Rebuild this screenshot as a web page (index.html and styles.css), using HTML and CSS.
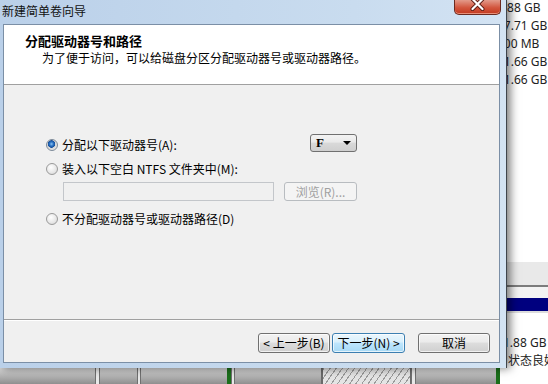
FILE: index.html
```html
<!DOCTYPE html>
<html lang="zh-CN">
<head>
    <meta charset="UTF-8">
    <title>新建简单卷向导</title>
    <link rel="stylesheet" href="styles.css">
</head>
<body>
    <!-- disk management window behind the wizard -->
    <div class="desktop">
        <div class="volumes">
            <ul class="sizes">
                <li>1.88 GB</li>
                <li>27.71 GB</li>
                <li>100 MB</li>
                <li>11.66 GB</li>
                <li>11.66 GB</li>
            </ul>
            <div class="band-head"></div>
            <div class="band-rule"></div>
            <div class="band-pale"></div>
            <div class="band-navy"></div>
            <div class="band-edge"></div>
            <div class="status">
                <p>1.88 GB</p>
                <p class="state">状态良好</p>
            </div>
        </div>
        <div class="strip">
            <div class="cell w95"></div>
            <div class="cell gap5"></div>
            <div class="cell w37"></div>
            <div class="cell gap4"></div>
            <div class="cell w86"></div>
            <div class="cell green"></div>
            <div class="cell gap4"></div>
            <div class="cell w86"></div>
            <div class="cell hatch"></div>
            <div class="cell gap5"></div>
            <div class="cell w80"></div>
            <div class="cell green"></div>
            <div class="cell rest"></div>
        </div>
    </div>

    <div class="wizard">
        <div class="titlebar">
            <span class="title">新建简单卷向导</span>
            <div class="close">
                <svg width="47" height="15" viewBox="0 0 47 15">
                    <path d="M18.5 -1 L28.5 9 M28.5 -1 L18.5 9" stroke="#5a1b12" stroke-width="4" stroke-linecap="round"/>
                    <path d="M18.5 -1 L28.5 9 M28.5 -1 L18.5 9" stroke="#fff" stroke-width="2.2" stroke-linecap="round"/>
                </svg>
            </div>
        </div>

        <div class="client">
            <div class="header">
                <h1>分配驱动器号和路径</h1>
                <p class="subtitle">为了便于访问，可以给磁盘分区分配驱动器号或驱动器路径。</p>
            </div>

            <div class="body">
                <div class="options">
                    <div class="row row-drive">
                        <label class="choice"><span class="radio checked"></span>分配以下驱动器号(A):</label>
                        <div class="dropdown">
                            <span class="letter">F</span>
                            <span class="arrow"></span>
                        </div>
                    </div>
                    <div class="row row-folder">
                        <label class="choice"><span class="radio"></span>装入以下空白 NTFS 文件夹中(M):</label>
                    </div>
                    <div class="row row-path">
                        <div class="textbox"></div>
                        <button class="browse" disabled>浏览(R)...</button>
                    </div>
                    <div class="row row-none">
                        <label class="choice"><span class="radio"></span>不分配驱动器号或驱动器路径(D)</label>
                    </div>
                </div>
            </div>

            <div class="footer">
                <button class="btn back">&lt; 上一步(B)</button>
                <button class="btn next">下一步(N) &gt;</button>
                <button class="btn cancel">取消</button>
            </div>
        </div>
    </div>
</body>
</html>
```

FILE: styles.css
```css
* {
    margin: 0;
    padding: 0;
    box-sizing: border-box;
}

html, body {
    width: 548px;
    height: 384px;
    overflow: hidden;
}

body {
    position: relative;
    background: #fff;
    font-family: "Noto Sans CJK SC", sans-serif;
    font-size: 12px;
    color: #000;
}

/* background window */
.desktop {
    height: 384px;
    display: flex;
    flex-direction: column;
}

.volumes {
    height: 368px;
    display: flex;
    flex-direction: column;
    font-family: "Noto Sans", "Noto Sans CJK SC", sans-serif;
    color: #222;
}

.sizes {
    list-style: none;
    height: 89px;
    padding-left: 497px;
    margin-top: -1px;
    line-height: 18px;
}

.band-head {
    margin-top: 174px;
    height: 23px;
    background: #e9e9e9;
}

.band-rule {
    height: 2px;
    background: #7c7c7c;
}

.band-pale {
    height: 11px;
    background: #f3f3f3;
}

.band-navy {
    height: 13px;
    background: #00007f;
}

.band-edge {
    height: 2px;
    background: #dcdcdc;
}

.status {
    flex: 1;
    padding: 21px 0 0 503px;
    line-height: 17px;
    white-space: nowrap;
}

.status .state {
    padding-left: 5px;
    font-family: "Noto Sans CJK SC", sans-serif;
}

.strip {
    height: 16px;
    display: flex;
    background: linear-gradient(#d9d9d9, #8f8f8f);
}

.cell {
    height: 100%;
}

.w95 { width: 95px; }
.w37 { width: 37px; }
.w86 { width: 86px; }
.w80 { width: 80px; }

.gap5, .gap4 {
    border-left: 1px solid #707070;
    border-right: 1px solid #707070;
    background: #e8e8e8;
}

.gap5 { width: 5px; }
.gap4 { width: 4px; }

.green {
    width: 4px;
    background: #1b6f1b;
}

.hatch {
    width: 90px;
    border-left: 2px solid #6a6a6a;
    border-right: 1px solid #6a6a6a;
    background: repeating-linear-gradient(-55deg, #e4e4e4 0 4px, #9a9a9a 4px 5px);
}

.rest {
    flex: 1;
    background: #fff;
}

/* wizard window */
.wizard {
    position: absolute;
    left: 0;
    top: 0;
    width: 507px;
    height: 368px;
    display: flex;
    flex-direction: column;
    background: linear-gradient(to right, #bad0e9, #c9dcef 70%, #d3e3f3);
    border-right: 1px solid #3f454c;
    box-shadow: 3px 0 9px rgba(0, 0, 0, 0.55);
}

.titlebar {
    height: 24px;
    display: flex;
    align-items: flex-start;
    padding-left: 2px;
}

.title {
    line-height: 22px;
    color: #111;
}

.close {
    margin-left: auto;
    margin-right: 5px;
    width: 47px;
    height: 15px;
    border: 1px solid #6b2a20;
    border-top: none;
    border-radius: 0 0 5px 5px;
    background: linear-gradient(#e39a8a, #d2553d 55%, #c2391f);
    box-shadow: inset 0 -1px 0 rgba(255, 200, 180, 0.6);
}

.close svg {
    display: block;
    margin-left: -1px;
}

.client {
    flex: 1;
    margin: 0 6px 5px 3px;
    border: 1px solid #7b8fa6;
    display: flex;
    flex-direction: column;
    background: #f0f0f0;
}

.header {
    height: 60px;
    padding: 8px 0 0 21px;
    background: #fff;
    border-bottom: 1px solid #a0a0a0;
}

.header h1 {
    font-size: 13px;
    font-weight: bold;
    line-height: 16px;
}

.subtitle {
    margin-top: 1px;
    padding-left: 17px;
    line-height: 16px;
}

.body {
    height: 235px;
    padding: 49px 0 0 42px;
    border-bottom: 1px solid #a0a0a0;
}

.options {
    width: 311px;
}

.row {
    display: flex;
    align-items: center;
}

.row-drive {
    height: 22px;
}

.row-folder {
    height: 16px;
    margin-top: 5px;
}

.row-path {
    margin-top: 5px;
    padding-left: 17px;
    align-items: flex-start;
}

.row-none {
    height: 16px;
    margin-top: 10px;
}

.choice {
    display: flex;
    align-items: center;
    gap: 4px;
    line-height: 16px;
    white-space: nowrap;
}

.radio {
    width: 12px;
    height: 12px;
    border-radius: 50%;
    border: 1px solid #9a9a9a;
    background: radial-gradient(circle at 40% 35%, #ffffff, #e6e6e6 60%, #cfcfcf);
}

.radio.checked {
    background: radial-gradient(circle at 45% 40%, #8ec3f0 0, #2a72c4 2px, #164f9a 3.5px, #d6d6d6 4px, #f4f4f4 100%);
    border-color: #7d8a99;
}

.dropdown {
    align-self: flex-start;
    margin-left: auto;
    width: 47px;
    height: 18px;
    border: 1px solid #707070;
    border-radius: 3px;
    background: linear-gradient(#f3f3f3, #e9e9e9 45%, #d9d9d9 50%, #cfcfcf);
    display: flex;
    align-items: center;
    padding: 0 5px 0 5px;
}

.letter {
    font-family: "Liberation Serif", serif;
    font-size: 13px;
    font-weight: bold;
}

.arrow {
    margin-left: auto;
    width: 0;
    height: 0;
    border-left: 4px solid transparent;
    border-right: 4px solid transparent;
    border-top: 4px solid #000;
}

.textbox {
    width: 211px;
    height: 19px;
    border: 1px solid #c3c6ca;
    background: #f0f0f0;
}

.browse {
    margin-left: auto;
    width: 73px;
    height: 19px;
    border: 1px solid #b8bcc0;
    border-radius: 3px;
    background: #f4f4f4;
    color: #a0a0a0;
    font-family: inherit;
    font-size: 12px;
    line-height: 16px;
}

.footer {
    flex: 1;
    display: flex;
    justify-content: flex-end;
    align-items: flex-start;
    padding: 12px 9px 0 0;
    border-top: 1px solid #fff;
}

.btn {
    width: 72px;
    height: 20px;
    border: 1px solid #707070;
    border-radius: 3px;
    background: linear-gradient(#f2f2f2, #ebebeb 45%, #dddddd 50%, #cfcfcf);
    font-family: inherit;
    font-size: 12px;
    line-height: 16px;
    color: #000;
    box-shadow: inset 0 0 0 1px rgba(255, 255, 255, 0.7);
}

.back {
    margin-right: 2px;
}

.next {
    width: 73px;
    margin-right: 13px;
    border-color: #3c7fb1;
    background: linear-gradient(#eaf6fd, #d9f0fc 45%, #bee6fd 50%, #a7d9f5);
}
```
